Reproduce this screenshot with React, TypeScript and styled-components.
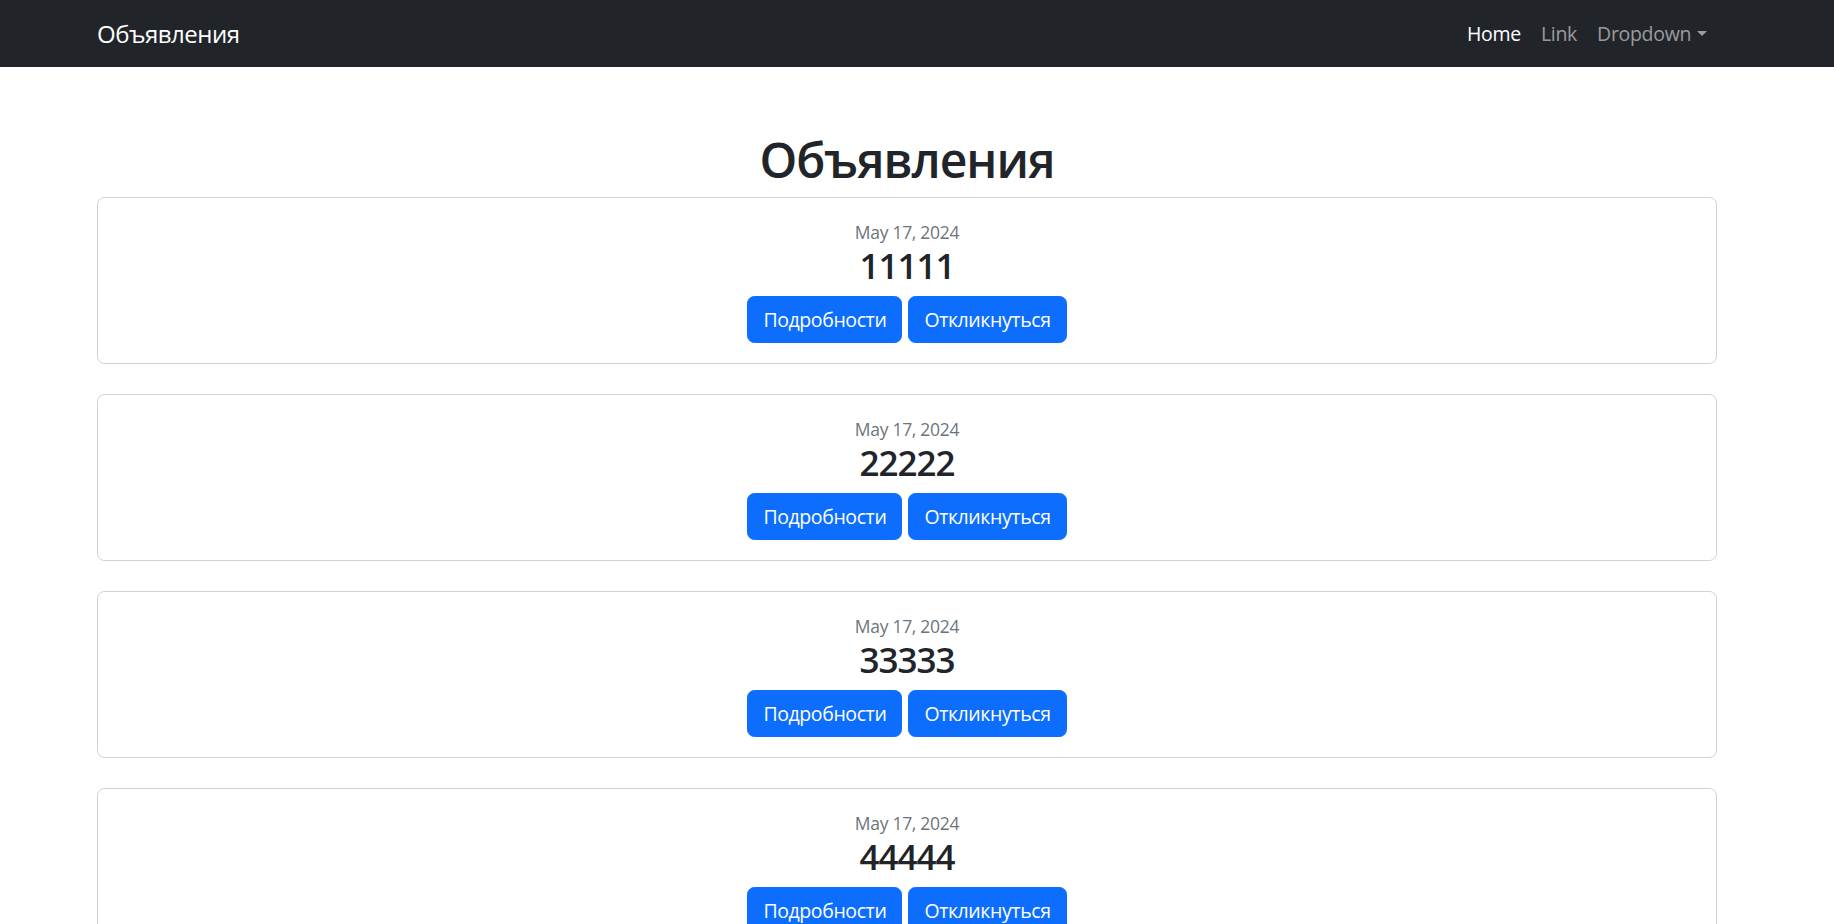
import styled, { createGlobalStyle } from "styled-components";

const GUTTER = "20px";
const FONT = `"Open Sans", "Noto Sans", "Liberation Sans", sans-serif`;

const GlobalStyle = createGlobalStyle`
  html {
    scrollbar-width: none;
  }
  body {
    margin: 0;
    font-family: ${FONT};
    font-size: 20px;
    color: #212529;
    background: #fff;
  }
  * {
    box-sizing: border-box;
  }
`;

const Navbar = styled.nav`
  height: 67px;
  background-color: #212529;
  padding-right: ${GUTTER};
  display: flex;
  align-items: center;
`;

const Container = styled.div`
  width: 100%;
  max-width: 1650px;
  margin: 0 auto;
  padding: 0 15px;
`;

const NavInner = styled(Container)`
  display: flex;
  align-items: center;
  justify-content: space-between;
`;

const Brand = styled.a`
  font-size: 24px;
  letter-spacing: -0.5px;
  line-height: 1.5;
  color: #fff;
  text-decoration: none;
`;

const NavList = styled.ul`
  display: flex;
  list-style: none;
  margin: 0;
  padding: 0;
`;

const NavLink = styled.a<{ $active?: boolean }>`
  display: block;
  padding: 0 10px;
  font-size: 19.5px;
  letter-spacing: -0.3px;
  line-height: 1.5;
  text-decoration: none;
  color: ${(p) => (p.$active ? "#fff" : "rgba(255, 255, 255, 0.55)")};
`;

const DropdownToggle = styled(NavLink)`
  &::after {
    content: "";
    display: inline-block;
    margin-left: 0.3em;
    vertical-align: 0.255em;
    border-top: 0.3em solid;
    border-right: 0.3em solid transparent;
    border-left: 0.3em solid transparent;
  }
`;

const Main = styled.main`
  padding-right: ${GUTTER};
`;

const Title = styled.h1`
  margin: 63px 0 7px;
  text-align: center;
  font-size: 48px;
  font-weight: 600;
  letter-spacing: -1px;
  line-height: 60px;
`;

const Card = styled.div`
  border: 1px solid rgba(0, 0, 0, 0.175);
  border-radius: 7.5px;
  padding: 20px;
  margin-bottom: 30px;
  text-align: center;
`;

const CardDate = styled.div`
  font-size: 17.5px;
  letter-spacing: -0.3px;
  line-height: 26px;
  padding-top: 1px;
  color: #6c757d;
`;

const CardTitle = styled.h3`
  margin: 0 0 9px;
  font-size: 35px;
  font-weight: 600;
  letter-spacing: -1px;
  line-height: 42px;
`;

const Actions = styled.div`
  display: flex;
  justify-content: center;
  gap: 6px;
`;

const Button = styled.button`
  height: 47px;
  padding: 0 15px;
  font-family: ${FONT};
  font-size: 19.5px;
  letter-spacing: -0.4px;
  line-height: 45px;
  color: #fff;
  background-color: #0d6efd;
  border: 1px solid #0d6efd;
  border-radius: 7.5px;
  cursor: pointer;
`;

const ads = ["11111", "22222", "33333", "44444", "55555"];

export default function App() {
  return (
    <>
      <GlobalStyle />
      <Navbar>
        <NavInner>
          <Brand href="#">Объявления</Brand>
          <NavList>
            <li>
              <NavLink href="#" $active>
                Home
              </NavLink>
            </li>
            <li>
              <NavLink href="#">Link</NavLink>
            </li>
            <li>
              <DropdownToggle href="#">Dropdown</DropdownToggle>
            </li>
          </NavList>
        </NavInner>
      </Navbar>
      <Main>
        <Container>
          <Title>Объявления</Title>
          {ads.map((title) => (
            <Card key={title}>
              <CardDate>May 17, 2024</CardDate>
              <CardTitle>{title}</CardTitle>
              <Actions>
                <Button>Подробности</Button>
                <Button>Откликнуться</Button>
              </Actions>
            </Card>
          ))}
        </Container>
      </Main>
    </>
  );
}
